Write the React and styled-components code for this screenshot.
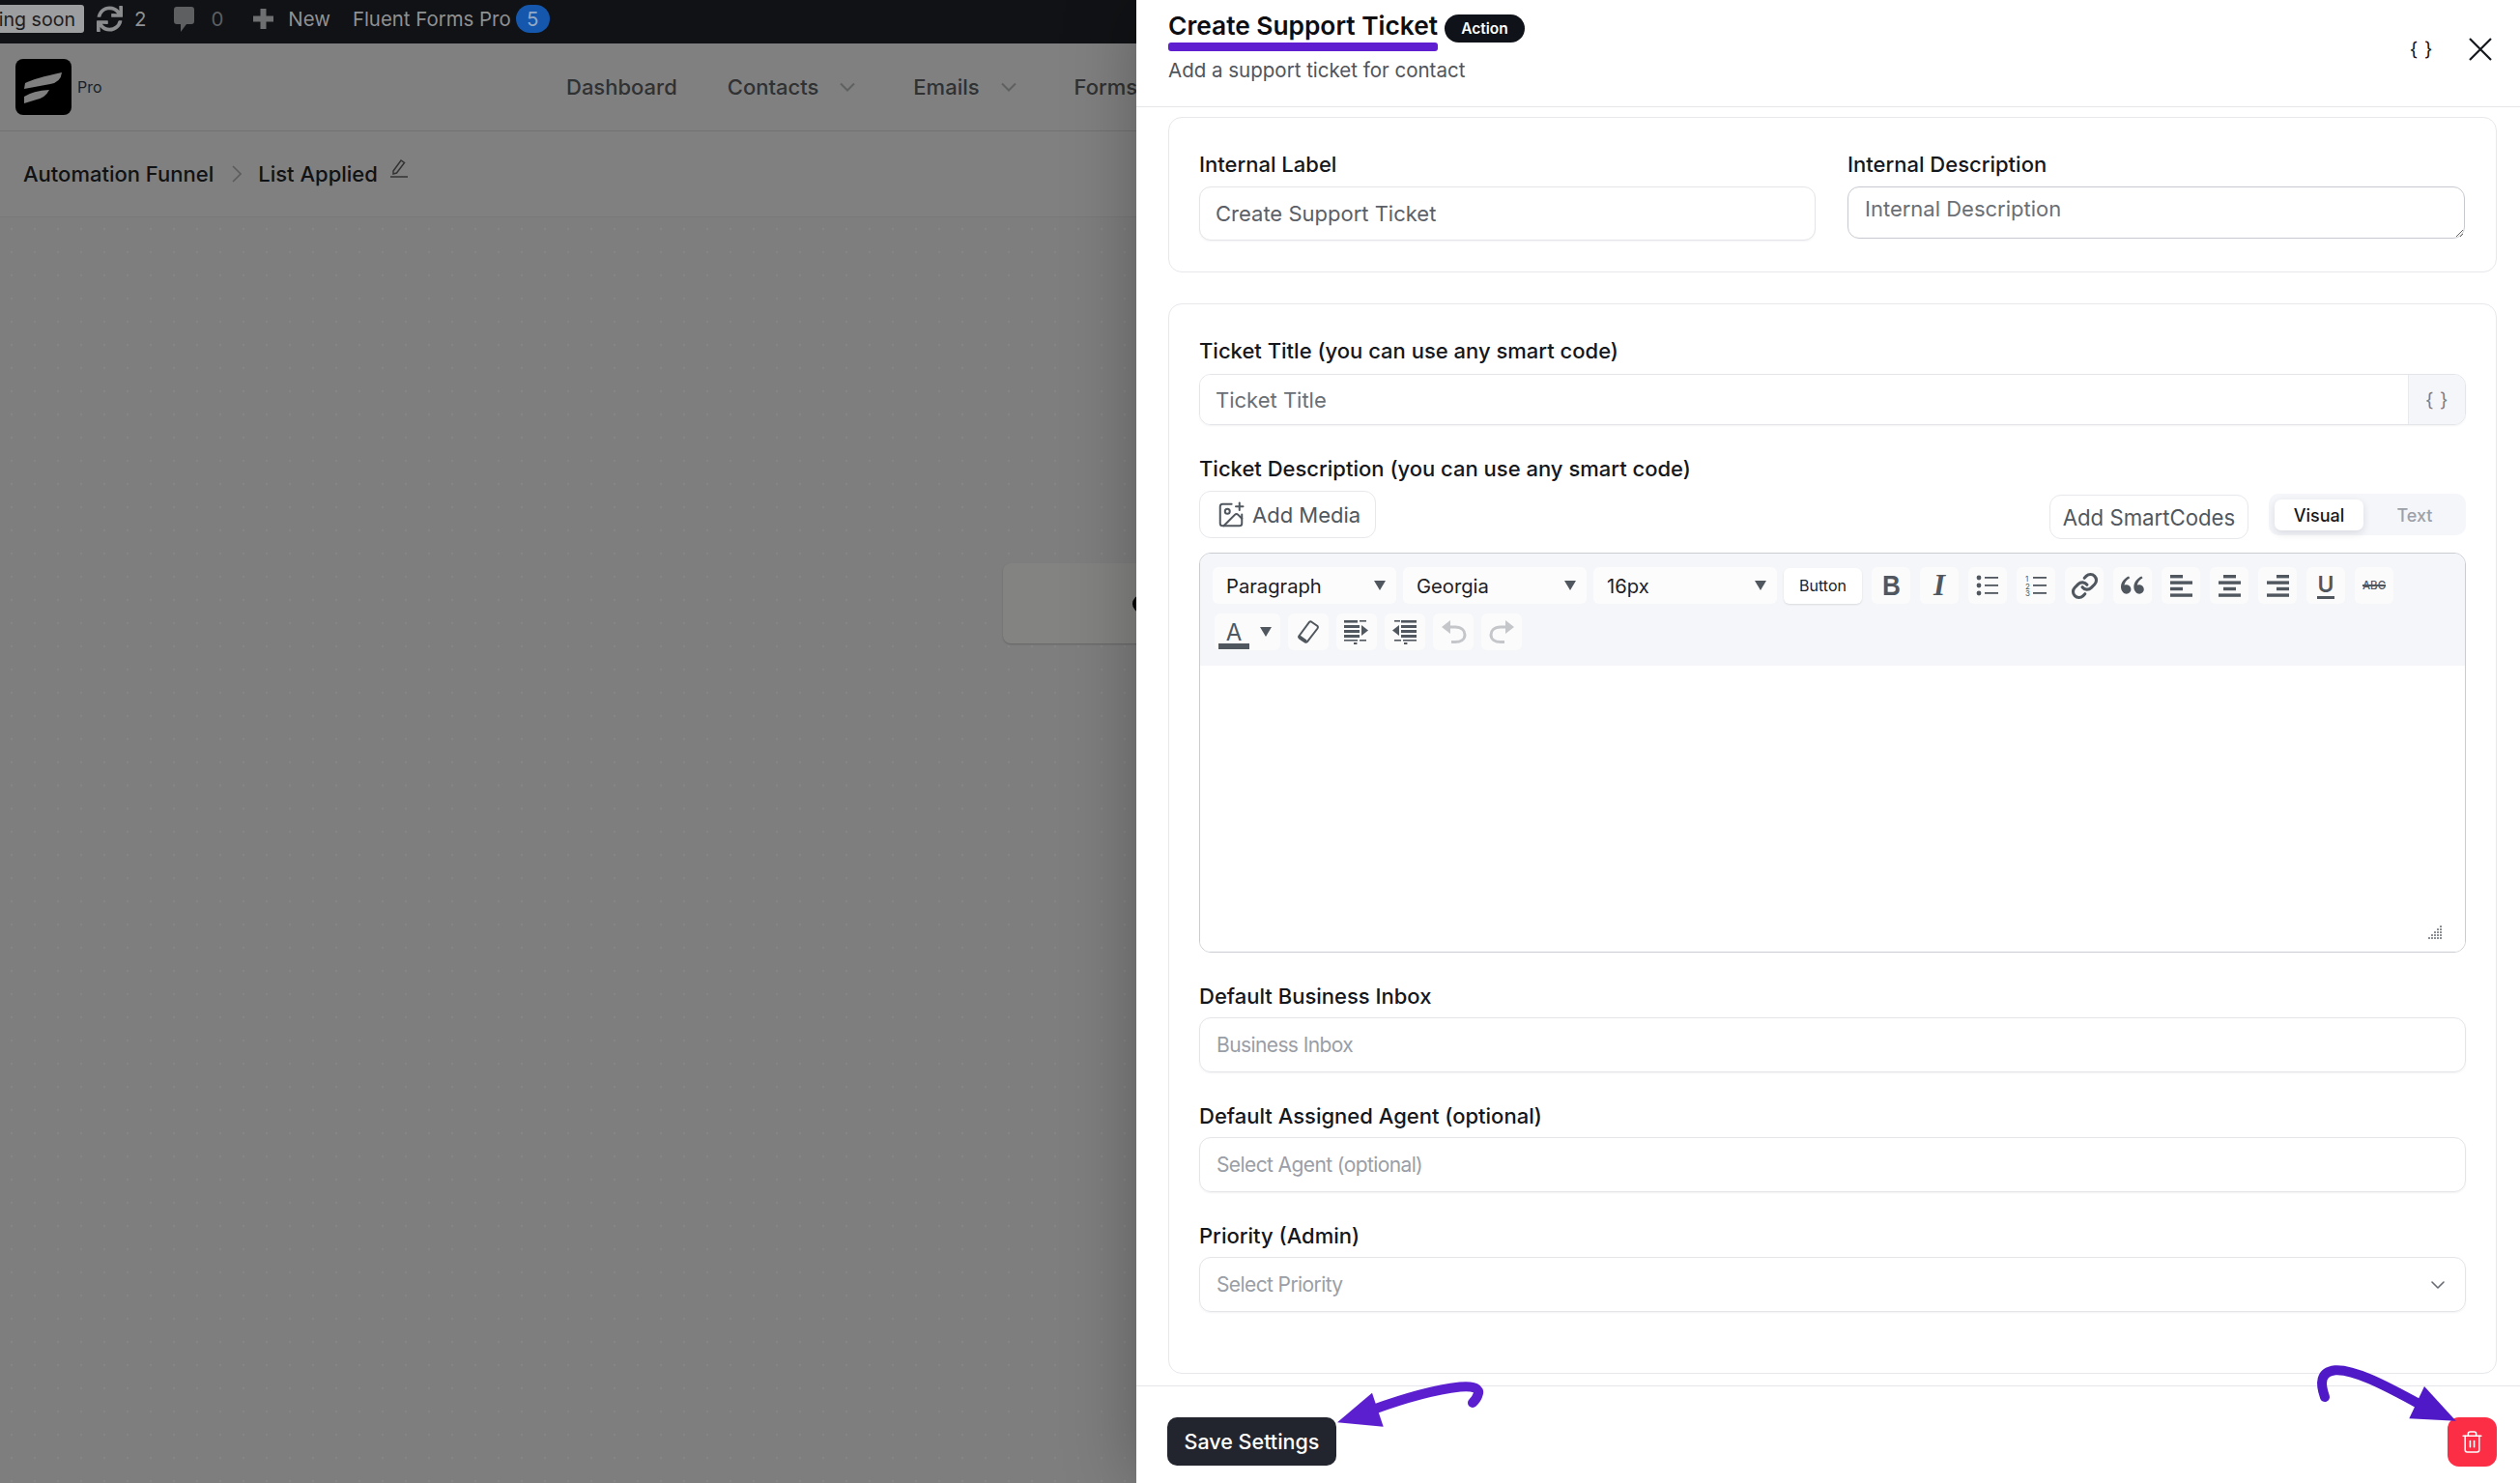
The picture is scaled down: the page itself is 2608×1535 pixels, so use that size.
import React from 'react';
import styled, { createGlobalStyle } from 'styled-components';
import { Link, ImagePlus, ChevronDown, Trash2 } from 'lucide-react';
import { FaSync } from 'react-icons/fa';
import { RiDoubleQuotesL } from 'react-icons/ri';

const GlobalStyle = createGlobalStyle`
  html, body {
    margin: 0;
    padding: 0;
    width: 2608px;
    height: 1535px;
    overflow: hidden;
    background: #fff;
  }
  * { box-sizing: border-box; }
  body {
    font-family: Inter, "Liberation Sans", sans-serif;
    color: #14171c;
  }
`;

const Shell = styled.div`
  display: flex;
  width: 2608px;
  height: 1535px;
`;

/* dimmed page behind the drawer */
const Page = styled.div`
  width: 1176px;
  flex: none;
  display: flex;
  flex-direction: column;
  background: #808080;
  overflow: hidden;
`;

const AdminBar = styled.div`
  height: 45px;
  flex: none;
  display: flex;
  align-items: center;
  padding-bottom: 6px;
  background: #101215;
  color: #8f9193;
  font-size: 20.4px;
  white-space: nowrap;
`;

const ComingSoon = styled.div`
  margin-left: -35px;
  height: 29px;
  width: 122px;
  flex: none;
  display: flex;
  align-items: center;
  justify-content: flex-end;
  padding-right: 9px;
  background: #9d9e9f;
  color: #1c1d1f;
  font-size: 19.6px;
  border-radius: 3px;
`;

const BarItem = styled.div`
  margin-left: ${(p) => p.$gap}px;
  display: flex;
  align-items: center;
  gap: ${(p) => p.$inner || 12}px;
  color: ${(p) => p.$color || '#8f9193'};
`;

const CountBadge = styled.span`
  width: 35px;
  height: 29px;
  border-radius: 15px;
  background: #1457ad;
  color: #93a9c6;
  display: flex;
  align-items: center;
  justify-content: center;
`;

const NavBar = styled.div`
  height: 91px;
  flex: none;
  display: flex;
  align-items: center;
  padding-left: 16px;
  border-bottom: 1px solid #727272;
`;

const LogoBox = styled.div`
  width: 58px;
  height: 58px;
  flex: none;
  background: #000;
  border-radius: 8px;
`;

const ProTag = styled.span`
  margin-left: 6px;
  width: 25px;
  flex: none;
  font-size: 16px;
  color: #1d1e20;
`;

const NavLinks = styled.div`
  margin-left: 481px;
  display: flex;
  align-items: center;
  gap: 52px;
  flex: none;
  white-space: nowrap;
  font-size: 22px;
  font-weight: 500;
  color: #2f3133;
`;

const NavLink = styled.span`
  display: flex;
  align-items: center;
  gap: 22px;
`;

const Crumbs = styled.div`
  height: 89px;
  flex: none;
  display: flex;
  align-items: center;
  padding-left: 24px;
  border-bottom: 1px solid #787878;
  font-size: 22px;
  font-weight: 500;
  color: #111214;
  white-space: nowrap;
`;

const CrumbSep = styled.svg`
  margin: 0 17px 0 19px;
`;

const PencilIcon = styled.svg`
  margin: -12px 0 0 13px;
`;

const Canvas = styled.div`
  position: relative;
  flex: 1;
  background-color: #7e7e7e;
  background-image: radial-gradient(circle, #858585 1.4px, transparent 1.6px);
  background-size: 24px 24px;
`;

const FunnelNode = styled.div`
  position: absolute;
  left: 1038px;
  top: 358px;
  width: 300px;
  height: 83px;
  padding-left: 134px;
  display: flex;
  align-items: center;
  background: #838382;
  border-radius: 8px;
  box-shadow: 0 1px 2px rgba(0, 0, 0, 0.2);
`;

const NodeDot = styled.span`
  width: 18px;
  height: 18px;
  border-radius: 50%;
  background: #050505;
`;

/* drawer */
const Drawer = styled.div`
  position: relative;
  width: 1432px;
  flex: none;
  display: flex;
  flex-direction: column;
  background: #fff;
  box-shadow: 0 0 70px rgba(0, 0, 0, 0.28);
`;

const DrawerHead = styled.div`
  height: 111px;
  flex: none;
  display: flex;
  justify-content: space-between;
  padding: 11px 29px 0 33px;
  border-bottom: 1px solid #e4e6e9;
`;

const TitleRow = styled.div`
  display: flex;
  align-items: flex-start;
  gap: 7px;
`;

const TitleBlock = styled.div`
  display: flex;
  flex-direction: column;
`;

const Title = styled.h2`
  margin: 0;
  font-size: 26.3px;
  line-height: 32px;
  font-weight: 600;
  white-space: nowrap;
  color: #0c0e12;
`;

const TitleLine = styled.div`
  height: 9px;
  margin-top: 1px;
  background: #5f1ecf;
  border-radius: 3px;
`;

const ActionBadge = styled.span`
  margin-top: 4px;
  width: 83px;
  height: 29px;
  border-radius: 15px;
  background: #0f1218;
  color: #fff;
  font-size: 15.5px;
  font-weight: 600;
  display: flex;
  align-items: center;
  justify-content: center;
`;

const Subtitle = styled.p`
  margin: 8px 0 0;
  font-size: 20.5px;
  line-height: 24px;
  color: #50555c;
`;

const HeadTools = styled.div`
  display: flex;
  align-items: center;
  gap: 37px;
  height: 80px;
`;

const CodeBraces = styled.span`
  font-size: 20px;
  font-weight: 400;
  letter-spacing: 0.5px;
  color: #14171c;
  white-space: pre;
`;

const DrawerBody = styled.div`
  flex: none;
  display: flex;
  flex-direction: column;
  gap: 32px;
  padding: 10px 24px 12px 33px;
`;

const Card = styled.div`
  border: 1px solid #e6e8eb;
  border-radius: 14px;
  padding: ${(p) => p.$top}px 31px ${(p) => p.$bottom}px;
`;

const TwoCols = styled.div`
  display: grid;
  grid-template-columns: 638px 639px;
  gap: 33px;
`;

const Stack = styled.div`
  display: flex;
  flex-direction: column;
  gap: 29px;
`;

const Field = styled.div`
  display: flex;
  flex-direction: column;
  gap: ${(p) => p.$gap || 7}px;
`;

const Label = styled.label`
  font-size: 22px;
  line-height: 32px;
  font-weight: 500;
  color: #14171c;
`;

const TextInput = styled.input`
  width: 100%;
  height: ${(p) => p.$h || 57}px;
  padding: 0 16px;
  border: 1px solid #e3e5e8;
  border-radius: 12px;
  background: #fff;
  outline: none;
  font-family: inherit;
  font-size: 22px;
  color: #5b6067;
  box-shadow: 0 1px 2px rgba(16, 24, 40, 0.05);
  &::placeholder {
    color: ${(p) => p.$ph || '#9a9ea6'};
    opacity: 1;
  }
`;

const TextArea = styled.textarea`
  width: 100%;
  height: 54px;
  padding: 9px 17px;
  border: 1px solid #c6cacf;
  border-radius: 12px;
  background: #fff;
  outline: none;
  font-family: inherit;
  font-size: 22px;
  line-height: 26px;
  &::placeholder {
    color: #6a6f76;
    opacity: 1;
  }
`;

const InputGroup = styled.div`
  display: flex;
  height: 53px;
  border: 1px solid #e3e5e8;
  border-radius: 12px;
  overflow: hidden;
  box-shadow: 0 1px 2px rgba(16, 24, 40, 0.05);
`;

const PlainInput = styled.input`
  flex: 1;
  min-width: 0;
  border: 0;
  padding: 0 16px;
  outline: none;
  font-family: inherit;
  font-size: 22px;
  &::placeholder {
    color: #6a6f76;
    opacity: 1;
  }
`;

const Addon = styled.div`
  width: 59px;
  flex: none;
  display: flex;
  align-items: center;
  justify-content: center;
  background: #f5f6fa;
  border-left: 1px solid #e8eaed;
  color: #7b8087;
  font-size: 20px;
  letter-spacing: 0.5px;
  white-space: pre;
`;

const MediaRow = styled.div`
  display: flex;
  justify-content: space-between;
  align-items: flex-start;
  height: 50px;
  margin-bottom: 7px;
`;

const MediaButton = styled.button`
  width: 183px;
  height: 49px;
  display: flex;
  align-items: center;
  gap: 7px;
  padding: 0 0 0 17px;
  background: #fff;
  border: 1px solid #e6e8eb;
  border-radius: 12px;
  font-family: inherit;
  font-size: 22px;
  color: #50575e;
`;

const MediaSide = styled.div`
  display: flex;
  align-items: flex-start;
  gap: 21px;
  padding-top: 3px;
`;

const SmartCodes = styled.button`
  width: 206px;
  height: 46px;
  margin-top: 1px;
  padding: 0;
  background: #fff;
  border: 1px solid #e6e8eb;
  border-radius: 12px;
  font-family: inherit;
  font-size: 22.2px;
  color: #50575e;
`;

const EditorTabs = styled.div`
  width: 204px;
  height: 43px;
  display: flex;
  padding: 6px;
  background: #f5f6fa;
  border-radius: 10px;
`;

const EditorTab = styled.span`
  width: 92px;
  height: 32px;
  display: flex;
  align-items: center;
  justify-content: center;
  font-size: 18px;
  font-weight: 500;
  border-radius: 7px;
  color: ${(p) => (p.$active ? '#14171c' : '#9ca1a9')};
  background: ${(p) => (p.$active ? '#fff' : 'transparent')};
  box-shadow: ${(p) => (p.$active ? '0 3px 8px rgba(16, 24, 40, 0.12)' : 'none')};
  margin-left: ${(p) => (p.$active ? 0 : 7)}px;
`;

const Editor = styled.div`
  position: relative;
  height: 414px;
  display: flex;
  flex-direction: column;
  border: 1px solid #c9ccd1;
  border-radius: 12px;
  overflow: hidden;
`;

const Toolbar = styled.div`
  height: 116px;
  flex: none;
  padding: 14px 13px 0;
  background: #f5f6f9;
  display: flex;
  flex-direction: column;
  gap: 10px;
`;

const ToolRow = styled.div`
  display: flex;
  align-items: center;
  gap: 7px;
`;

const ToolGroup = styled.div`
  display: flex;
  align-items: center;
  gap: ${(p) => p.$gap || 10}px;
  margin-left: ${(p) => p.$left || 0}px;
`;

const FormatSelect = styled.div`
  position: relative;
  width: 190px;
  height: 38px;
  display: flex;
  align-items: center;
  padding-left: 14px;
  background: #fcfcfd;
  border-radius: 6px;
  font-size: 20.2px;
  color: #1d2024;
`;

const Caret = styled.span`
  position: absolute;
  right: ${(p) => p.$right || 11}px;
  top: 50%;
  margin-top: -5px;
  border-left: 6px solid transparent;
  border-right: 6px solid transparent;
  border-top: 10px solid #50575e;
`;

const ToolTextButton = styled.div`
  width: 81px;
  height: 37px;
  display: flex;
  align-items: center;
  justify-content: center;
  background: #fff;
  border-radius: 6px;
  box-shadow: 0 1px 2px rgba(16, 24, 40, 0.12);
  font-size: 16px;
  color: #1d2024;
`;

const Tool = styled.div`
  position: relative;
  width: ${(p) => p.$w || 40}px;
  height: 38px;
  flex: none;
  display: flex;
  align-items: center;
  justify-content: center;
  background: #fbfbfc;
  border-radius: 6px;
  color: ${(p) => (p.$muted ? '#c4c6c9' : '#50575e')};
`;

const BoldGlyph = styled.span`
  font-family: "Liberation Sans", sans-serif;
  font-weight: 700;
  font-size: 29px;
  transform: scaleX(0.9);
`;

const ItalicGlyph = styled.span`
  font-family: "Liberation Serif", serif;
  font-style: italic;
  font-weight: 700;
  font-size: 31px;
`;

const UnderGlyph = styled.span`
  font-size: 23px;
  line-height: 24px;
  font-weight: 600;
  border-bottom: 3px solid #50575e;
  padding: 0 1px;
`;

const StrikeGlyph = styled.span`
  font-size: 11.5px;
  font-weight: 500;
  text-decoration: line-through;
  text-decoration-thickness: 1.5px;
`;

const ColorGlyph = styled.span`
  position: absolute;
  left: 4px;
  top: 8px;
  width: 32px;
  text-align: center;
  font-size: 24px;
  line-height: 23px;
  border-bottom: 6px solid #50575e;
`;

const EditArea = styled.div`
  flex: 1;
  position: relative;
  background: #fff;
`;

const GripIcon = styled.svg`
  position: absolute;
  right: 23px;
  bottom: 12px;
`;

const SelectBox = styled.div`
  height: 57px;
  display: flex;
  align-items: center;
  justify-content: space-between;
  padding: 0 16px 0 17px;
  border: 1px solid #e3e5e8;
  border-radius: 12px;
  box-shadow: 0 1px 2px rgba(16, 24, 40, 0.05);
  font-size: 21px;
  letter-spacing: -0.6px;
  color: #9a9ea6;
`;

const DrawerFoot = styled.div`
  flex: 1;
  display: flex;
  justify-content: space-between;
  align-items: flex-start;
  padding: 32px 24px 0 32px;
  border-top: 1px solid #e4e6e9;
`;

const SaveButton = styled.button`
  width: 175px;
  height: 50px;
  padding: 0;
  border: 0;
  border-radius: 10px;
  background: #22252e;
  color: #fff;
  font-family: inherit;
  font-size: 21.5px;
  font-weight: 500;
`;

const TrashButton = styled.button`
  width: 51px;
  height: 51px;
  border: 0;
  padding: 0;
  border-radius: 12px;
  background: #fb2e45;
  color: #fff;
  display: flex;
  align-items: center;
  justify-content: center;
`;

/* hand drawn arrows lying over the drawer */
const ArrowMark = styled.svg`
  position: absolute;
  left: ${(p) => p.$left}px;
  top: ${(p) => p.$top}px;
  z-index: 5;
`;

const Chevron = () => (
  <svg width="16" height="10" viewBox="0 0 16 10" style={{ marginRight: 8 }}>
    <polyline points="1,1.5 8,8.5 15,1.5" fill="none" stroke="#5f6061" strokeWidth="2" />
  </svg>
);

const BulletsIcon = () => (
  <svg width="24" height="22" viewBox="0 0 24 22" fill="#50575e">
    <circle cx="3" cy="3" r="2.4" /><circle cx="3" cy="11" r="2.4" /><circle cx="3" cy="19" r="2.4" />
    <rect x="9" y="2" width="14" height="1.8" /><rect x="9" y="10" width="14" height="1.8" /><rect x="9" y="18" width="14" height="1.8" />
  </svg>
);

const NumbersIcon = () => (
  <svg width="24" height="24" viewBox="0 0 24 24" fill="#50575e">
    <text x="1" y="7.5" fontSize="8" fontFamily="Inter">1</text>
    <text x="1" y="15.5" fontSize="8" fontFamily="Inter">2</text>
    <text x="1" y="23" fontSize="8" fontFamily="Inter">3</text>
    <rect x="9" y="3" width="14" height="1.8" /><rect x="9" y="11" width="14" height="1.8" /><rect x="9" y="19" width="14" height="1.8" />
  </svg>
);

const AlignIcon = ({ short }) => {
  const x = short === 'left' ? 0 : short === 'center' ? 5 : 10;
  return (
    <svg width="23" height="23" viewBox="0 0 23 23" fill="#50575e">
      <rect x={x} y="0" width="13" height="3.4" />
      <rect x="0" y="6.4" width="23" height="3.4" />
      <rect x={x} y="12.8" width="13" height="3.4" />
      <rect x="0" y="19.4" width="23" height="3.4" />
    </svg>
  );
};

const EraserIcon = () => (
  <svg width="24" height="26" viewBox="0 0 24 26">
    <path d="M15 2.5 L21.5 7 Q22.5 8 21.5 9.5 L11 23 Q10 24.2 8.5 23.4 L3 19.6 Q1.6 18.4 2.6 17 L13 3 Q14 2 15 2.5 Z" fill="none" stroke="#50575e" strokeWidth="2" />
    <path d="M2.6 17 L9.5 21.8 L8.8 23.6 L3 19.6 Q1.6 18.4 2.6 17 Z" fill="#50575e" stroke="#50575e" strokeWidth="1.6" />
  </svg>
);

const IndentIcon = () => (
  <svg width="26" height="26" viewBox="0 0 26 26" fill="#50575e">
    <rect x="0" y="1" width="14" height="2.6" /><rect x="16" y="1" width="7" height="1.6" />
    <rect x="0" y="6" width="16" height="3" /><rect x="0" y="11" width="16" height="3" /><rect x="0" y="16" width="16" height="3" />
    <polygon points="18,6 25,11.5 18,17" />
    <rect x="0" y="21" width="14" height="1.6" /><rect x="16" y="21" width="7" height="1.6" />
    <rect x="10" y="24" width="3.4" height="2" />
  </svg>
);

const OutdentIcon = () => (
  <svg width="26" height="26" viewBox="0 0 26 26" fill="#50575e">
    <rect x="9" y="1" width="16" height="2.6" /><rect x="2" y="1" width="6" height="1.6" />
    <rect x="9" y="6" width="16" height="3" /><rect x="9" y="11" width="16" height="3" /><rect x="9" y="16" width="16" height="3" />
    <polygon points="7,6 0,11.5 7,17" />
    <rect x="11" y="21" width="14" height="1.6" /><rect x="2" y="21" width="7" height="1.6" />
    <rect x="12" y="24" width="3.4" height="2" />
  </svg>
);

const UndoIcon = ({ flip }) => (
  <svg width="27" height="24" viewBox="0 0 27 24" style={flip ? { transform: 'scaleX(-1)' } : undefined}>
    <polygon points="1,7 10,0 10,14" fill="#c4c6c9" />
    <path d="M8 7 H15 C22 7 25 11 25 15 C25 19.5 21 22.5 15 22.5 H11" fill="none" stroke="#c4c6c9" strokeWidth="3" />
  </svg>
);

const App = () => {
  return (
    <>
      <GlobalStyle />
      <Shell>
        <Page>
          <AdminBar>
            <ComingSoon>Coming soon</ComingSoon>
            <BarItem $gap={13}>
              <FaSync size={27} color="#8a8c8e" />
              <span>2</span>
            </BarItem>
            <BarItem $gap={29} $inner={17} $color="#5d5f61">
              <svg width="21" height="26" viewBox="0 0 21 26" fill="#5d5f61">
                <path d="M3 0 H18 Q21 0 21 3 V15 Q21 18 18 18 H13 L7 26 V18 H3 Q0 18 0 15 V3 Q0 0 3 0 Z" />
              </svg>
              <span>0</span>
            </BarItem>
            <BarItem $gap={31} $inner={15}>
              <svg width="21" height="21" viewBox="0 0 21 21" fill="#6d6f71">
                <rect x="7.5" y="0" width="6" height="21" /><rect x="0" y="7.5" width="21" height="6" />
              </svg>
              <span>New</span>
            </BarItem>
            <BarItem $gap={23} $inner={5}>
              <span>Fluent Forms Pro</span>
              <CountBadge>5</CountBadge>
            </BarItem>
          </AdminBar>

          <NavBar>
            <LogoBox>
              <svg width="58" height="58" viewBox="0 0 58 58" fill="#808080">
                <path d="M10 25 Q20 20 48 14 Q47 24 36 26 L9 31 Z" />
                <path d="M9 46 L9 39 Q18 33 35 32 Q31 40 22 42 Z" />
              </svg>
            </LogoBox>
            <ProTag>Pro</ProTag>
            <NavLinks>
              <NavLink>Dashboard</NavLink>
              <NavLink>Contacts<Chevron /></NavLink>
              <NavLink>Emails<Chevron /></NavLink>
              <NavLink>Forms</NavLink>
            </NavLinks>
          </NavBar>

          <Crumbs>
            <span>Automation Funnel</span>
            <CrumbSep width="10" height="18" viewBox="0 0 10 18">
              <polyline points="1,1 9,9 1,17" fill="none" stroke="#5c5c5c" strokeWidth="1.6" />
            </CrumbSep>
            <span>List Applied</span>
            <PencilIcon width="18" height="20" viewBox="0 0 18 20" fill="none" stroke="#333" strokeWidth="1.5">
              <path d="M3 13 L11 2 L14.5 4.5 L6.5 15 L3 16 Z" />
              <path d="M0 19 H18" />
            </PencilIcon>
          </Crumbs>

          <Canvas>
            <FunnelNode>
              <NodeDot />
            </FunnelNode>
          </Canvas>
        </Page>

        <Drawer>
          <DrawerHead>
            <div>
              <TitleRow>
                <TitleBlock>
                  <Title>Create Support Ticket</Title>
                  <TitleLine />
                </TitleBlock>
                <ActionBadge>Action</ActionBadge>
              </TitleRow>
              <Subtitle>Add a support ticket for contact</Subtitle>
            </div>
            <HeadTools>
              <CodeBraces>{'{ }'}</CodeBraces>
              <svg width="24" height="24" viewBox="0 0 24 24" fill="none" stroke="#14171c" strokeWidth="2.2">
                <path d="M1 1 L23 23 M23 1 L1 23" />
              </svg>
            </HeadTools>
          </DrawerHead>

          <DrawerBody>
            <Card $top={32} $bottom={32}>
              <TwoCols>
                <Field>
                  <Label>Internal Label</Label>
                  <TextInput $h={56} readOnly value="Create Support Ticket" />
                </Field>
                <Field>
                  <Label>Internal Description</Label>
                  <TextArea placeholder="Internal Description" />
                </Field>
              </TwoCols>
            </Card>

            <Card $top={32} $bottom={63}>
              <Stack>
                <Field $gap={8}>
                  <Label>Ticket Title (you can use any smart code)</Label>
                  <InputGroup>
                    <PlainInput placeholder="Ticket Title" />
                    <Addon>{'{ }'}</Addon>
                  </InputGroup>
                </Field>

                <Field>
                  <Label>Ticket Description (you can use any smart code)</Label>
                  <MediaRow>
                    <MediaButton>
                      <ImagePlus size={30} strokeWidth={1.6} />
                      Add Media
                    </MediaButton>
                    <MediaSide>
                      <SmartCodes>Add SmartCodes</SmartCodes>
                      <EditorTabs>
                        <EditorTab $active>Visual</EditorTab>
                        <EditorTab>Text</EditorTab>
                      </EditorTabs>
                    </MediaSide>
                  </MediaRow>
                  <Editor>
                    <Toolbar>
                      <ToolRow>
                        <FormatSelect>Paragraph<Caret /></FormatSelect>
                        <FormatSelect>Georgia<Caret /></FormatSelect>
                        <FormatSelect>16px<Caret /></FormatSelect>
                        <ToolTextButton>Button</ToolTextButton>
                        <ToolGroup $left={3}>
                          <Tool><BoldGlyph>B</BoldGlyph></Tool>
                          <Tool><ItalicGlyph>I</ItalicGlyph></Tool>
                          <Tool><BulletsIcon /></Tool>
                          <Tool><NumbersIcon /></Tool>
                          <Tool><Link size={29} strokeWidth={2.6} /></Tool>
                          <Tool><RiDoubleQuotesL size={32} /></Tool>
                          <Tool><AlignIcon short="left" /></Tool>
                          <Tool><AlignIcon short="center" /></Tool>
                          <Tool><AlignIcon short="right" /></Tool>
                          <Tool><UnderGlyph>U</UnderGlyph></Tool>
                          <Tool><StrikeGlyph>ABC</StrikeGlyph></Tool>
                        </ToolGroup>
                      </ToolRow>
                      <ToolRow>
                        <ToolGroup $gap={8} $left={2}>
                          <Tool $w={68}>
                            <ColorGlyph>A</ColorGlyph>
                            <Caret $right={9} />
                          </Tool>
                          <Tool $w={42}><EraserIcon /></Tool>
                          <Tool $w={42}><IndentIcon /></Tool>
                          <Tool $w={42}><OutdentIcon /></Tool>
                          <Tool $w={42} $muted><UndoIcon /></Tool>
                          <Tool $w={42} $muted><UndoIcon flip /></Tool>
                        </ToolGroup>
                      </ToolRow>
                    </Toolbar>
                    <EditArea>
                      <GripIcon width="16" height="16" viewBox="0 0 16 16" fill="#8b8f94">
                        <rect x="13" y="1" width="2" height="2" />
                        <rect x="10" y="4" width="2" height="2" /><rect x="13" y="4" width="2" height="2" />
                        <rect x="7" y="7" width="2" height="2" /><rect x="10" y="7" width="2" height="2" /><rect x="13" y="7" width="2" height="2" />
                        <rect x="4" y="10" width="2" height="2" /><rect x="7" y="10" width="2" height="2" /><rect x="10" y="10" width="2" height="2" /><rect x="13" y="10" width="2" height="2" />
                        <rect x="1" y="13" width="2" height="2" /><rect x="4" y="13" width="2" height="2" /><rect x="7" y="13" width="2" height="2" /><rect x="10" y="13" width="2" height="2" /><rect x="13" y="13" width="2" height="2" />
                      </GripIcon>
                    </EditArea>
                  </Editor>
                </Field>

                <Field $gap={6}>
                  <Label>Default Business Inbox</Label>
                  <SelectBox>Business Inbox</SelectBox>
                </Field>
                <Field $gap={6}>
                  <Label>Default Assigned Agent (optional)</Label>
                  <SelectBox>Select Agent (optional)</SelectBox>
                </Field>
                <Field $gap={6}>
                  <Label>Priority (Admin)</Label>
                  <SelectBox>
                    Select Priority
                    <ChevronDown size={24} strokeWidth={1.6} color="#666b72" />
                  </SelectBox>
                </Field>
              </Stack>
            </Card>
          </DrawerBody>

          <DrawerFoot>
            <SaveButton>Save Settings</SaveButton>
            <TrashButton><Trash2 size={25} strokeWidth={1.5} /></TrashButton>
          </DrawerFoot>

          <ArrowMark $left={198} $top={1425} width="170" height="60" viewBox="0 0 170 60">
            <polygon points="10,47.3 46,16.7 57.7,51.7" fill="#5b1fd0" />
            <path d="M47 34 C 80 22 115 13 137 10.5 C 152 9 158 13 155.7 18 C 155 21 152 25 150 27" fill="none" stroke="#5b1fd0" strokeWidth="10" strokeLinecap="round" />
          </ArrowMark>
          <ArrowMark $left={1219} $top={1410} width="155" height="70" viewBox="0 0 155 70">
            <polygon points="146.7,60.7 114,25 98.3,58.3" fill="#5019c8" />
            <path d="M11 36 C 6 22 6 10 21.7 8.3 C 40 7 70 22 110 44" fill="none" stroke="#5019c8" strokeWidth="10" strokeLinecap="round" />
          </ArrowMark>
        </Drawer>
      </Shell>
    </>
  );
};

export default App;
